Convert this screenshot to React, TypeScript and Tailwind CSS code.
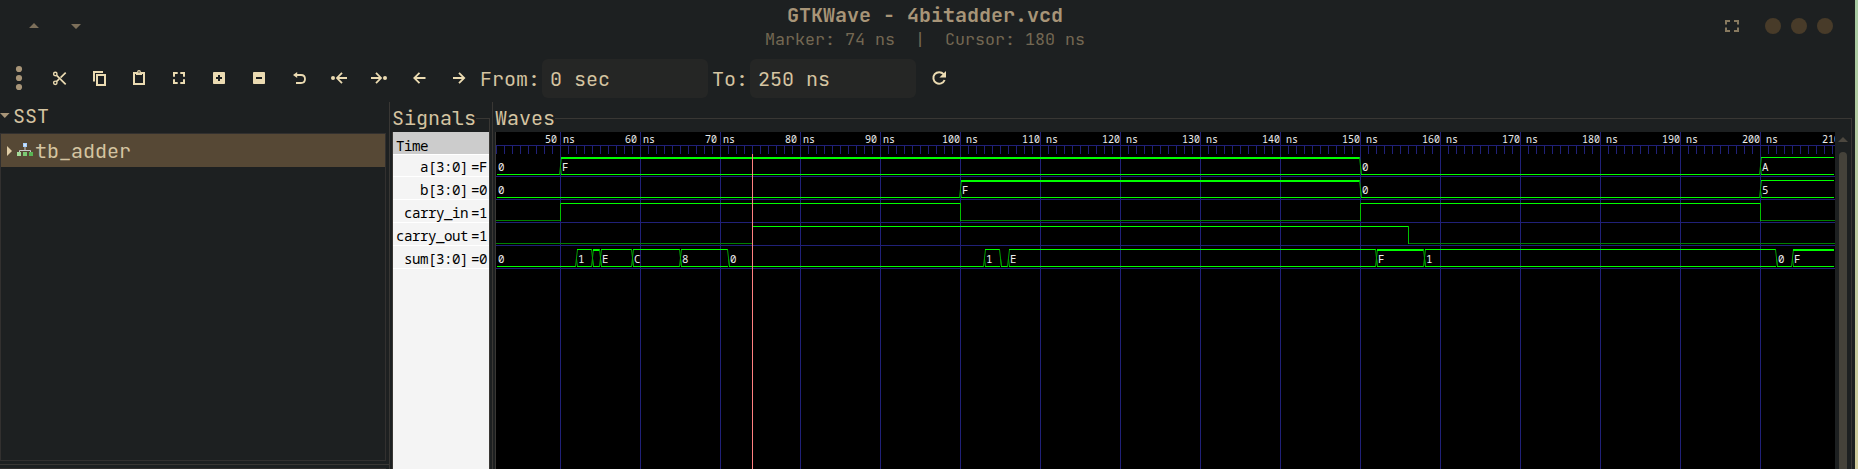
import type { ReactNode } from 'react';

const X0 = 496;
const xOf = (ns: number) => 160 + 8 * ns - X0;
const END = 1835 - X0;

type Segment = [from: number, value: string];
type Wave = { name: string; current: string; bus: boolean; segments: Segment[] };

const waves: Wave[] = [
  { name: 'a[3:0]', current: 'F', bus: true, segments: [[42, '0'], [50, 'F'], [150, '0'], [200, 'A']] },
  { name: 'b[3:0]', current: '0', bus: true, segments: [[42, '0'], [100, 'F'], [150, '0'], [200, '5']] },
  { name: 'carry_in', current: '1', bus: false, segments: [[42, '0'], [50, '1'], [100, '0'], [150, '1'], [200, '0']] },
  { name: 'carry_out', current: '1', bus: false, segments: [[42, '0'], [74, '1'], [156, '0']] },
  {
    name: 'sum[3:0]',
    current: '0',
    bus: true,
    segments: [
      [42, '0'], [52, '1'], [54, 'F'], [55, 'E'], [59, 'C'], [65, '8'], [71, '0'], [103, '1'],
      [105, '0'], [106, 'E'], [152, 'F'], [158, '1'], [202, '0'], [204, 'F'],
    ],
  },
];

const labels = [50, 60, 70, 80, 90, 100, 110, 120, 130, 140, 150, 160, 170, 180, 190, 200, 210];

function BusTrace({ segments, sep }: { segments: Segment[]; sep: number }) {
  const base = sep - 2;
  const top = sep - 19;
  return (
    <g>
      {segments.map(([t, v], i) => {
        const last = i === segments.length - 1;
        const x = i === 0 ? 1 : xOf(t) + 1;
        const e = last ? END - 1 : xOf(segments[i + 1][0]) - 1;
        const prev = i > 0 ? segments[i - 1][1] : '';
        return (
          <g key={t}>
            {i > 0 && (
              <g stroke="#00a000" strokeWidth="1" shapeRendering="auto">
                {v !== '0' && <path d={`M${x - 1.5} ${base + 0.5}L${x + 0.5} ${top + 0.5}`} />}
                {prev !== '0' && <path d={`M${x - 1.5} ${top + 0.5}L${x + 0.5} ${base + 0.5}`} />}
                <path d={`M${x - 0.5} ${base - 7}L${x + 0.5} ${base + 0.5}`} />
              </g>
            )}
            <rect x={x} y={base} width={e - x + (last ? 0 : 1)} height="1" fill="#00ff00" />
            {v !== '0' && (
              <rect x={x} y={top} width={e - x + (last ? 0 : 1)} height={v === 'F' ? 2 : 1} fill="#00ff00" />
            )}
            {e - x > 8 && (
              <text x={i === 0 ? 2 : x + 1} y={base - 3} fill="#ececec">{v}</text>
            )}
          </g>
        );
      })}
    </g>
  );
}

function BitTrace({ segments, sep }: { segments: Segment[]; sep: number }) {
  const base = sep - 2;
  const top = sep - 19;
  return (
    <g>
      {segments.map(([t, v], i) => {
        const x = xOf(t);
        const e = i === segments.length - 1 ? END : xOf(segments[i + 1][0]);
        return (
          <g key={t}>
            <rect x={x} y={v === '1' ? top : base} width={e - x} height="1" fill={v === '1' ? '#00ff00' : '#008000'} />
            {i > 0 && <rect x={x} y={top} width="1" height={base - top + 1} fill="#00c000" />}
          </g>
        );
      })}
    </g>
  );
}

function WaveCanvas() {
  return (
    <svg
      width={END}
      height="337"
      viewBox={`0 132 ${END} 337`}
      className="block shrink-0 bg-black font-['Noto_Sans_Mono','DejaVu_Sans_Mono',monospace] text-[10.8px]"
      shapeRendering="crispEdges"
    >
      <rect x="0" y="145" width={END} height="1" fill="#202078" />
      {Array.from({ length: 168 }, (_, i) => (
        <rect key={i} x={i * 8} y="145" width="1" height="9" fill="#202078" />
      ))}
      {labels.slice(0, 16).map((t) => (
        <rect key={t} x={xOf(t)} y="132" width="1" height="337" fill="#202078" />
      ))}
      {waves.map((w, i) => (
        <rect key={w.name} x="0" y={176 + i * 23} width={END} height="1" fill="#202078" />
      ))}
      {labels.map((t) => (
        <text
          key={t}
          x={xOf(t) - (t < 100 ? 15 : 18)}
          y="143"
          fill="#ececec"
          textLength={t < 100 ? 30 : 36}
          lengthAdjust="spacingAndGlyphs"
        >
          {`${t} ns`}
        </text>
      ))}
      {waves.map((w, i) =>
        w.bus ? (
          <BusTrace key={w.name} segments={w.segments} sep={176 + i * 23} />
        ) : (
          <BitTrace key={w.name} segments={w.segments} sep={176 + i * 23} />
        ),
      )}
      <rect x={xOf(74)} y="154" width="1" height="315" fill="#ff8080" />
    </svg>
  );
}

function Tool({ children }: { children: ReactNode }) {
  return (
    <button className="flex w-10 shrink-0 justify-start">
      <svg width="20" height="20" viewBox="0 0 20 20" fill="none" stroke="#ebdbb2" strokeWidth="2" className="overflow-visible">
        {children}
      </svg>
    </button>
  );
}

const brackets = 'M4 8.7V5H7.7M10.3 5H14V8.7M14 11.3V15H10.3M7.7 15H4V11.3';

function Toolbar() {
  return (
    <div className="flex h-12 items-center text-[20px]">
      <svg width="50" height="30" viewBox="0 0 50 30" fill="#a89578" className="shrink-0">
        <circle cx="19" cy="6" r="3.1" />
        <circle cx="19" cy="15" r="3.1" />
        <circle cx="19" cy="24" r="3.1" />
      </svg>
      <Tool>
        <g strokeWidth="1.4">
          <circle cx="5.3" cy="6" r="1.7" />
          <circle cx="5.3" cy="14.8" r="1.7" />
          <path d="M6.6 7.3L15.7 16.3M6.6 13.5L9 11.1M10.6 9.6L15.7 4.7" strokeWidth="1.7" />
        </g>
      </Tool>
      <Tool>
        <path d="M4 13.5V4H13" />
        <rect x="7" y="7" width="8" height="10" />
      </Tool>
      <Tool>
        <rect x="4" y="5" width="10" height="11" />
        <path d="M6 5.5H12" strokeWidth="3" />
        <circle cx="9" cy="4" r="1.3" strokeWidth="1.2" fill="#1d2021" />
      </Tool>
      <Tool>
        <path d={brackets} />
      </Tool>
      <Tool>
        <rect x="3" y="4" width="12" height="12" rx="0.8" fill="#ebdbb2" stroke="none" />
        <path d="M6 10H12M9 7V13" stroke="#1d2021" />
      </Tool>
      <Tool>
        <rect x="3" y="4" width="12" height="12" rx="0.8" fill="#ebdbb2" stroke="none" />
        <path d="M6 10H12" stroke="#1d2021" />
      </Tool>
      <Tool>
        <path d="M6 7H11C13.4 7 15 8.7 15 11S13.4 15 11 15H6" strokeWidth="1.8" />
        <path d="M3 7L7.2 4V10Z" fill="#ebdbb2" stroke="none" />
      </Tool>
      <Tool>
        <circle cx="3" cy="10" r="2" fill="#ebdbb2" stroke="none" />
        <path d="M17 10H7.5M12 4.8L7 10L12 15.2" strokeWidth="1.8" />
      </Tool>
      <Tool>
        <circle cx="15" cy="10" r="2" fill="#ebdbb2" stroke="none" />
        <path d="M1 10H10.5M6 4.8L11 10L6 15.2" strokeWidth="1.8" />
      </Tool>
      <Tool>
        <path d="M15.5 10H5M9.5 4.8L4.3 10L9.5 15.2" strokeWidth="1.8" />
      </Tool>
      <Tool>
        <path d="M3 10H13.5M9 4.8L14.2 10L9 15.2" strokeWidth="1.8" />
      </Tool>
      <label className="-ml-[10px] w-[62px] shrink-0 pt-px">From:</label>
      <div className="flex h-[39px] w-[166px] shrink-0 items-center rounded-md bg-[#252625] pt-px pl-2">0 sec</div>
      <label className="w-[42px] shrink-0 pt-px pl-1">To:</label>
      <div className="flex h-[39px] w-[166px] shrink-0 items-center rounded-md bg-[#252625] pt-px pl-2">250 ns</div>
      <svg width="20" height="20" viewBox="0 0 20 20" className="ml-[13px] shrink-0" fill="none" stroke="#ebdbb2" strokeWidth="2">
        <path d="M14.6 6.2A5.8 5.8 0 1 0 15.6 12" />
        <path d="M17 3V9.6H10.4Z" fill="#ebdbb2" stroke="none" />
      </svg>
    </div>
  );
}

function TitleBar() {
  return (
    <header className="flex h-[54px]">
      <div className="w-[700px] shrink-0">
        <svg width="100" height="40" viewBox="0 0 100 40" fill="#7c6f5a">
          <path d="M29 28L34 23L39 28ZM71 24H81L76 29Z" />
        </svg>
      </div>
      <div className="w-[450px] shrink-0 pt-[3px] text-center whitespace-pre">
        <div className="text-[20px] leading-6 font-bold text-[#a89578]">GTKWave - 4bitadder.vcd</div>
        <div className="text-[16.67px] leading-6 text-[#746853]">{'Marker: 74 ns  |  Cursor: 180 ns'}</div>
      </div>
      <svg width="705" height="54" viewBox="1150 0 705 54" className="shrink-0">
        <path d="M1726 24.5V21H1730M1734 21H1738V24.5M1738 27.5V31H1734M1730 31H1726V27.5" fill="none" stroke="#87795f" strokeWidth="2" />
        <g fill="#483b29">
          <circle cx="1773" cy="26" r="8" />
          <circle cx="1799" cy="26" r="8" />
          <circle cx="1825" cy="26" r="8" />
        </g>
      </svg>
    </header>
  );
}

function TreePane() {
  return (
    <section className="flex w-[389px] shrink-0 flex-col">
      <div className="flex h-[31px] shrink-0">
        <svg width="13" height="28" viewBox="0 102 13 28" fill="#a89578">
          <path d="M0 113H9.6L4.8 118Z" />
        </svg>
        <span className="leading-[28px]">SST</span>
      </div>
      <div className="h-[328px] w-[386px] shrink-0 border border-[#32302f]">
        <div className="flex h-[33px] items-center bg-[#564835]">
          <svg width="34" height="33" viewBox="1 134 34 33" className="shrink-0">
            <path d="M7 146L12 151L7 156Z" fill="#e0cda6" />
            <path d="M19.5 152V150.5H30.5V152M25 147V150.5" fill="none" stroke="#c8c8c8" />
            <rect x="23" y="143" width="4" height="4" fill="#a8d0ff" />
            <rect x="24" y="144" width="2" height="2" fill="#d0e6ff" />
            <rect x="17" y="152" width="4" height="4" fill="#a4dc98" />
            <rect x="23" y="152" width="4" height="4" fill="#7cca74" />
            <rect x="29" y="152" width="4" height="4" fill="#58b454" />
          </svg>
          <span>tb_adder</span>
        </div>
      </div>
      <div className="mt-[3px] h-px shrink-0 bg-[#393734]" />
      <div className="mt-[3px] h-px w-[386px] shrink-0 bg-[#32302f]" />
    </section>
  );
}

function SignalsPane() {
  return (
    <section className="flex w-[103px] shrink-0 flex-col border-l border-[#393734]">
      <div className="flex h-[30px] shrink-0 pl-[2px] leading-[32px]">
        <span>Signals</span>
        <span className="mt-4 h-[14px] w-[14px] border-t border-r border-[#393734]" />
      </div>
      <div className="ml-[2px] flex w-[98px] grow flex-col border-r border-l border-[#393734]">
        <div className="flex grow flex-col bg-[#f4f4f4] font-['Noto_Sans_Mono','DejaVu_Sans_Mono',monospace] text-[14.2px] leading-[18px] tracking-[-0.52px] text-black">
          <div className="h-[22px] shrink-0 bg-[#cccccc] pt-[5px] pl-[3px]">Time</div>
          {waves.map((w, i) => (
            <div
              key={w.name}
              className={`flex shrink-0 justify-end gap-[3px] border-t border-white pr-[2px] ${i === 0 ? 'h-[22px] pt-[3px]' : 'h-[23px] pt-[4px]'}`}
            >
              <span>{w.name}</span>
              <span>={w.current}</span>
            </div>
          ))}
          <div className="h-px bg-white" />
        </div>
      </div>
    </section>
  );
}

function WavesPane() {
  return (
    <section className="flex w-[1363px] shrink-0 flex-col border-l border-[#393734]">
      <div className="flex h-[30px] shrink-0 pl-[2px] leading-[32px]">
        <span>Waves</span>
        <span className="mt-4 h-[14px] w-[1297px] border-t border-r border-[#393734]" />
      </div>
      <div className="ml-[2px] flex w-[1357px] grow border-r border-l border-[#393734]">
        <WaveCanvas />
        <div className="flex flex-col items-center pl-[3px]">
          <svg width="10" height="20" viewBox="0 0 10 20" fill="#4c473f" className="shrink-0">
            <path d="M0 10L5 5L10 10Z" />
          </svg>
          <div className="w-2 grow rounded-t-full bg-[#45423a]" />
        </div>
      </div>
    </section>
  );
}

export default function App() {
  return (
    <div className="flex h-[469px] w-[1858px] overflow-hidden bg-[#1d2021] font-['JetBrains_Mono','DejaVu_Sans_Mono',monospace] text-[20px] text-[#d5c4a1]">
      <div className="flex w-[1855px] shrink-0 flex-col overflow-hidden">
        <TitleBar />
        <Toolbar />
        <main className="flex grow">
          <TreePane />
          <SignalsPane />
          <WavesPane />
        </main>
      </div>
      <div className="w-[3px] shrink-0 bg-linear-to-b from-[#a9cba4] to-[#d0cb9c]" />
    </div>
  );
}
